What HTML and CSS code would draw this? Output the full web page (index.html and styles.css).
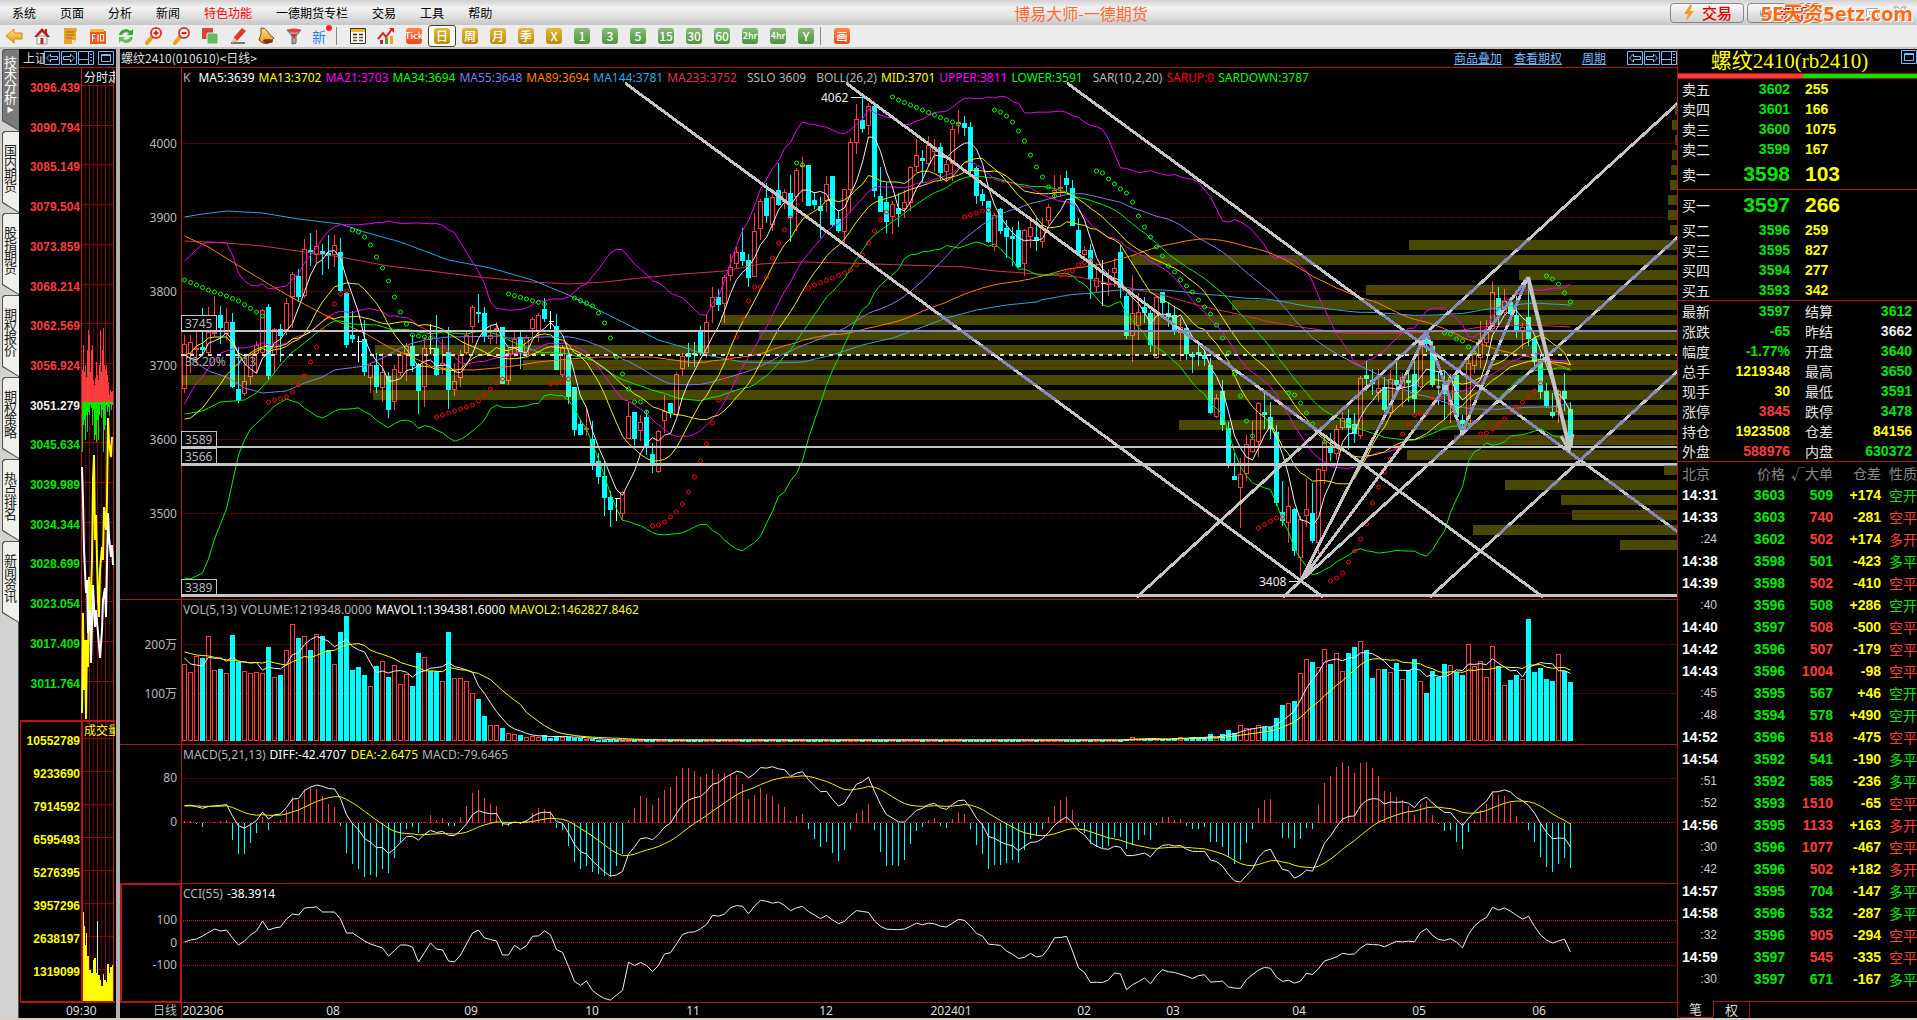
FILE: index.html
```html
<!DOCTYPE html>
<html lang="zh-CN">
<head>
<meta charset="utf-8">
<title>博易大师-一德期货</title>
<link rel="stylesheet" href="styles.css">
</head>
<body>
<svg class="defs" width="0" height="0" aria-hidden="true">
  <defs>
    <linearGradient id="gold" x1="0" y1="0" x2="0" y2="1"><stop offset="0" stop-color="#ffe27a"/><stop offset="1" stop-color="#e59a12"/></linearGradient>
    <symbol id="i-prev" viewBox="0 0 16 14"><path d="M.5.5h15v13H.5z M2.500 7l4-4v2.500h7v3h-7V11z" fill="#000" stroke="#7ab8ff"/></symbol>
    <symbol id="i-next" viewBox="0 0 16 14"><path d="M.5.5h15v13H.5z M13.500 7l-4-4v2.500h-7v3h7V11z" fill="#000" stroke="#7ab8ff"/></symbol>
    <symbol id="i-split" viewBox="0 0 16 14"><path d="M.5.5h15v13H.5z M10.500 1v12M1 8.500h9M12 3.500h2M12 6.500h2M12 9.500h2" fill="none" stroke="#7ab8ff"/></symbol>
    <symbol id="i-max" viewBox="0 0 16 14"><path d="M.5.5h15v13H.5z" fill="none" stroke="#7ab8ff"/><path d="M3.500 3.500h9v7h-9z M3 4.500h10" fill="none" stroke="#7ab8ff"/></symbol>
  </defs>
</svg>

<header class="menubar">
  <nav class="menus">
    <button>系统</button><button>页面</button><button>分析</button><button>新闻</button><button class="hot">特色功能</button><button>一德期货专栏</button><button>交易</button><button>工具</button><button>帮助</button>
  </nav>
  <h1 class="app-title">博易大师-一德期货</h1>
  <div class="header-actions">
    <button class="pill"><svg width="14" height="16" viewBox="0 0 14 16"><path d="M8 0L2 9h4l-2 7 8-10H8l2-6z" fill="#f79a1c"/></svg>交易</button>
    <button class="pill"><svg width="14" height="16" viewBox="0 0 14 16"><circle cx="7" cy="8" r="6" fill="#999"/><circle cx="7" cy="8" r="2" fill="#ddd"/></svg>资讯</button>
  </div>
  <div class="window-controls">
    <button aria-label="最小化"><svg width="14" height="14"><path d="M2 9.500h10v2H2z" fill="#fff" stroke="#aaa"/></svg></button>
    <button aria-label="还原"><svg width="14" height="14"><path d="M1.500 2.500h11v9h-11z M4.500 5.500h5v3h-5z" fill="#fff" stroke="#aaa"/></svg></button>
    <button aria-label="关闭"><svg width="14" height="14"><path d="M1 1h4l2 3 2-3h4L9 7l4 6H9L7 9l-2 4H1l4-6z" fill="#fff" stroke="#999"/></svg></button>
  </div>
  <div class="watermark">5E天资5etz.com</div>
</header>

<div class="toolbar" role="toolbar">
  <button aria-label="后退"><svg width="18" height="18" viewBox="0 0 18 18"><path d="M1 9l8-7v4h8v6H9v4z" fill="url(#gold)" stroke="#d08c10"/></svg></button>
  <button aria-label="首页"><svg width="18" height="18" viewBox="0 0 18 18"><path d="M4 9h10v8H4z" fill="#f2f2f2" stroke="#999"/><path d="M7.500 11h3v6h-3z" fill="#b03020"/><path d="M1 10l8-9 3 3V2h2v4l3 4h-3L9 5l-5 5z" fill="#c02018"/></svg></button>
  <button aria-label="记事"><svg width="18" height="18" viewBox="0 0 18 18"><path d="M3 1h12q2 2 0 4v9l-4 3H3z" fill="#e5a52c"/><path d="M5 5h8M5 8h8M5 11h6" stroke="#a86a10"/><path d="M11 17l4-4h-4z" fill="#ffe9a8"/></svg></button>
  <button aria-label="F10"><svg width="18" height="18" viewBox="0 0 18 18"><path d="M1 4h16v13H1z" fill="#f05a20"/><path d="M1 2h14v3H1z" fill="#f7b43c"/><path d="M3.500 14.500v-7h3M3.500 11h2.500M9 7.500v7M11.500 7.500h3v6.500h-3z" fill="none" stroke="#fff"/></svg></button>
  <button aria-label="刷新"><svg width="18" height="18" viewBox="0 0 18 18"><path d="M2 8q1-6 8-6l4 2 2-2v6h-6l2-2q-5-2-7 2z" fill="#3da63a"/><path d="M16 10q-1 6-8 6l-4-2-2 2v-6h6l-2 2q5 2 7-2z" fill="#64c050"/></svg></button>
  <button aria-label="放大"><svg width="18" height="18" viewBox="0 0 18 18"><path d="M7 10L2 16" stroke="#f0a020" stroke-width="4" stroke-linecap="round"/><circle cx="11" cy="6" r="5" fill="#fff" stroke="#e03828" stroke-width="2"/><path d="M8.500 6h5M11 3.500v5" stroke="#e02020" stroke-width="2"/></svg></button>
  <button aria-label="缩小"><svg width="18" height="18" viewBox="0 0 18 18"><path d="M7 10L2 16" stroke="#f0a020" stroke-width="4" stroke-linecap="round"/><circle cx="11" cy="6" r="5" fill="#fff" stroke="#e03828" stroke-width="2"/><path d="M8.500 6h5" stroke="#e02020" stroke-width="2"/></svg></button>
  <button aria-label="叠加"><svg width="18" height="18" viewBox="0 0 18 18"><rect x="1" y="1" width="11" height="11" rx="1" fill="#d8423c"/><rect x="6" y="6" width="11" height="11" rx="1" fill="#66b86a" stroke="#eee"/></svg></button>
  <button aria-label="画笔"><svg width="18" height="18" viewBox="0 0 18 18"><path d="M2 16h14" stroke="#777" stroke-width="2"/><path d="M13 1l4 3-9 10-5 2 2-6z" fill="#e63828"/><path d="M5 10l3 4-5 2z" fill="#f4c890"/></svg></button>
  <button aria-label="预警"><svg width="18" height="18" viewBox="0 0 18 18"><path d="M4 1q4-1 7 4 1 3 6 6l-5 5q-6 2-10-3 3-6 2-12z" fill="url(#gold)" stroke="#8a4a12"/><ellipse cx="11" cy="14" rx="5" ry="2" fill="#7b3516"/></svg></button>
  <button aria-label="筛选"><svg width="18" height="18" viewBox="0 0 18 18"><path d="M2 3h14l-5 6v7l-4 1V9z" fill="#aaa" stroke="#666"/><ellipse cx="9" cy="3.500" rx="6" ry="2" fill="#e64040"/><path d="M6 7l3 5 3-5z" fill="#e03030"/></svg></button>
  <button class="new-badge">新<i></i></button>
  <span class="sep"></span>
  <button aria-label="报价"><svg width="18" height="18" viewBox="0 0 18 18"><path d="M1.500 1.500h15v15h-15z" fill="#fff" stroke="#333"/><path d="M2 2h14v3H2z" fill="#f3b820"/><path d="M4 7.500h4M10 7.500h4" stroke="#222" stroke-width="1.500"/><path d="M4 10.500h4M10 10.500h4" stroke="#c22" stroke-width="1.500"/><path d="M4 13.500h4M10 13.500h4" stroke="#272" stroke-width="1.500"/></svg></button>
  <button aria-label="走势"><svg width="18" height="18" viewBox="0 0 18 18"><path d="M3 13h3v4H3z" fill="#c22"/><path d="M8 11h3v6H8z" fill="#3a3"/><path d="M13 9h3v8h-3z" fill="#e8a820"/><path d="M1 12l5-6 3 4 6-8" fill="none" stroke="#e02018" stroke-width="2"/><path d="M12 1h5v5z" fill="#e02018"/></svg></button>
  <button><b class="ico tick">Tick</b></button>
  <button class="active"><b class="ico period">日</b></button>
  <button><b class="ico period">周</b></button>
  <button><b class="ico period">月</b></button>
  <button><b class="ico period">季</b></button>
  <button><b class="ico period">X</b></button>
  <button><b class="ico minute">1</b></button>
  <button><b class="ico minute">3</b></button>
  <button><b class="ico minute">5</b></button>
  <button><b class="ico minute">15</b></button>
  <button><b class="ico minute">30</b></button>
  <button><b class="ico minute">60</b></button>
  <button><b class="ico minute small">2hr</b></button>
  <button><b class="ico minute small">4hr</b></button>
  <button><b class="ico minute">Y</b></button>
  <span class="sep"></span>
  <button><b class="ico tick draw">画</b></button>
</div>

<main class="workspace">
  <nav class="side-tabs">
    <button class="current">技术分析<i>▶</i></button>
    <button>国内期货</button>
    <button>股指期货</button>
    <button>期权报价</button>
    <button>期权策略</button>
    <button>热点排名</button>
    <button>新闻资讯</button>
  </nav>

  <section class="mini">
    <div class="title-row"><h2>上证</h2>
      <div class="tools">
        <button aria-label="上一个"><svg width="16" height="14"><use href="#i-prev"/></svg></button>
        <button aria-label="下一个"><svg width="16" height="14"><use href="#i-next"/></svg></button>
        <button aria-label="分栏"><svg width="16" height="14"><use href="#i-split"/></svg></button>
        <button aria-label="最大化" class="gap"><svg width="16" height="14"><use href="#i-max"/></svg></button>
      </div>
    </div>
    <svg id="mini" class="mini-plot"></svg>
    <div class="mini-time">09:30</div>
  </section>

  <section class="chart">
    <div class="title-row">
      <h2>螺纹2410(010610)&lt;日线&gt;</h2>
      <div class="links"><a href="#overlay">商品叠加</a><a href="#options">查看期权</a><a class="cycle" href="#cycle">周期</a></div>
      <div class="tools">
        <button aria-label="上一个"><svg width="16" height="14"><use href="#i-prev"/></svg></button>
        <button aria-label="下一个"><svg width="16" height="14"><use href="#i-next"/></svg></button>
        <button aria-label="分栏"><svg width="16" height="14"><use href="#i-split"/></svg></button>
      </div>
    </div>
    <div class="pane">
      <svg id="price" class="plot price-plot"></svg>
      <div class="legend">
        <span class="dim lead">K</span><span class="white">MA5:3639</span><span class="yellow">MA13:3702</span><span class="magenta">MA21:3703</span><span class="lime">MA34:3694</span><span class="violet">MA55:3648</span><span class="orange">MA89:3694</span><span class="sky">MA144:3781</span><span class="rose">MA233:3752</span><span class="dim group">SSLO 3609</span><span class="dim group">BOLL(26,2)</span><span class="yellow">MID:3701</span><span class="magenta">UPPER:3811</span><span class="lime">LOWER:3591</span><span class="dim group">SAR(10,2,20)</span><span class="red">SARUP:0</span><span class="lime">SARDOWN:3787</span>
      </div>
    </div>
    <div class="pane">
      <svg id="volume" class="plot volume-plot"></svg>
      <div class="legend"><span class="dim">VOL(5,13)</span><span class="dim">VOLUME:1219348.0000</span><span class="white">MAVOL1:1394381.6000</span><span class="yellow">MAVOL2:1462827.8462</span></div>
    </div>
    <div class="pane">
      <svg id="macd" class="plot macd-plot"></svg>
      <div class="legend"><span class="dim">MACD(5,21,13)</span><span class="white">DIFF:-42.4707</span><span class="yellow">DEA:-2.6475</span><span class="dim">MACD:-79.6465</span></div>
    </div>
    <div class="pane">
      <svg id="cci" class="plot cci-plot"></svg>
      <div class="legend"><span class="dim">CCI(55)</span><span class="white">-38.3914</span></div>
    </div>
    <svg id="dates" class="plot date-axis"></svg>
  </section>

  <aside class="quote">
    <div class="quote-title"><h2>螺纹2410(rb2410)</h2><button aria-label="最大化"><svg width="16" height="14"><use href="#i-max"/></svg></button></div>
    <div class="ratio"><i class="ratio-buy"></i><i class="ratio-sell"></i></div>
    <table class="book">
      <tr><th>卖五</th><td class="g">3602</td><td class="y">255</td></tr>
      <tr><th>卖四</th><td class="g">3601</td><td class="y">166</td></tr>
      <tr><th>卖三</th><td class="g">3600</td><td class="y">1075</td></tr>
      <tr><th>卖二</th><td class="g">3599</td><td class="y">167</td></tr>
      <tr class="best"><th>卖一</th><td class="g">3598</td><td class="y">103</td></tr>
    </table>
    <table class="book">
      <tr class="best"><th>买一</th><td class="g">3597</td><td class="y">266</td></tr>
      <tr><th>买二</th><td class="g">3596</td><td class="y">259</td></tr>
      <tr><th>买三</th><td class="g">3595</td><td class="y">827</td></tr>
      <tr><th>买四</th><td class="g">3594</td><td class="y">277</td></tr>
      <tr><th>买五</th><td class="g">3593</td><td class="y">342</td></tr>
    </table>
    <table class="stats">
      <tr><th>最新</th><td class="g">3597</td><th>结算</th><td class="g">3612</td></tr>
      <tr><th>涨跌</th><td class="g">-65</td><th>昨结</th><td class="w">3662</td></tr>
      <tr><th>幅度</th><td class="g">-1.77%</th><th>开盘</th><td class="g">3640</td></tr>
      <tr><th>总手</th><td class="y">1219348</td><th>最高</th><td class="g">3650</td></tr>
      <tr><th>现手</th><td class="y">30</td><th>最低</th><td class="g">3591</td></tr>
      <tr><th>涨停</th><td class="r">3845</td><th>跌停</th><td class="g">3478</td></tr>
      <tr><th>持仓</th><td class="y">1923508</td><th>仓差</th><td class="y">84156</td></tr>
      <tr><th>外盘</th><td class="r">588976</td><th>内盘</th><td class="g">630372</td></tr>
    </table>
    <div class="trades-wrap">
      <table class="trades">
        <thead><tr><th>北京</th><th>价格</th><th>√大单</th><th>仓差</th><th>性质</th></tr></thead>
        <tbody id="trades"></tbody>
      </table>
    </div>
    <div class="quote-tabs"><button class="current">笔</button><button>权</button></div>
  </aside>
</main>
<script src="chart.js"></script>
</body>
</html>
```

FILE: styles.css
```css
* { box-sizing: border-box; }
body { margin: 0; min-height: 100vh; display: flex; flex-direction: column; background: #d4d0c8; color: #ddd; font: 12px/16px "Noto Sans", "Noto Sans CJK SC", sans-serif; overflow-x: hidden; }
button { margin: 0; padding: 0; border: 0; background: none; color: inherit; font: inherit; }
h1, h2 { margin: 0; font-weight: 400; }
.defs { position: absolute; }

.menubar { position: relative; display: flex; align-items: center; height: 25px; background: linear-gradient(#d2d2d2, #f1f1f1 30%, #e4e4e4 60%, #c6c6c6); color: #000; font-family: "Noto Sans CJK SC", sans-serif; }
.menus { display: flex; gap: 24px; padding-left: 12px; white-space: nowrap; }
.menus .hot { color: #f00; }
.app-title { flex: 1; text-align: center; font-size: 16px; line-height: 24px; color: #ff6a30; }
.header-actions { display: flex; justify-content: flex-end; gap: 3px; padding-right: 16px; }
.pill { display: flex; align-items: center; justify-content: center; gap: 6px; width: 74px; height: 20px; border: 1px solid #888; border-radius: 4px; background: linear-gradient(#fafafa, #cfcfcf); color: #e00000; font-size: 15px; font-weight: 500; }
.window-controls { display: flex; gap: 14px; padding-right: 10px; }
.window-controls button { height: 14px; }
.window-controls svg { display: block; }
.watermark { position: absolute; right: 4px; top: 2px; color: #ff6a10; font: 700 20px/24px "Open Sans", "Noto Sans CJK SC", sans-serif; text-shadow: 1px 1px 0 #fff, -1px -1px 0 #fff; }

.toolbar { display: flex; height: 24px; background: #ececec; border-bottom: 2px solid #c8c4c4; }
.toolbar button { width: 28px; height: 22px; display: flex; align-items: center; justify-content: center; }
.toolbar .active { border: 1px solid #444; border-radius: 3px; background: #fff; }
.sep { width: 8px; border-left: 1px solid #888; margin: 2px 0; }
.new-badge { color: #2f86e8; font: 14px/18px "Noto Sans CJK SC", sans-serif; }
.new-badge i { width: 6px; height: 6px; border-radius: 3px; background: #f22; align-self: flex-start; }
.ico { width: 16px; height: 16px; border-radius: 3px; color: #fff; font: 500 12px/16px "Noto Sans CJK SC", sans-serif; text-align: center; white-space: nowrap; display: flex; justify-content: center; }
.period { background: linear-gradient(#e0bc38, #bc8a08); }
.minute { background: linear-gradient(#84bc74, #4f9442); }
.tick { background: linear-gradient(#ff8448, #ee4418); font-size: 9px; }
.small { font-size: 9px; }
.draw { font-size: 11px; }

.workspace { flex: 1; display: flex; align-items: stretch; margin-bottom: 2px; }
.side-tabs { width: 19px; padding-left: 2px; background: #d2d2d2; border-right: 1px solid #555; }
.side-tabs button { position: relative; z-index: 0; display: flex; flex-direction: column; align-items: center; justify-content: center; width: 17px; height: 82px; padding: 0 2px 8px; color: #222; font: 13px/12px "Noto Sans CJK SC", sans-serif; white-space: normal; word-break: break-all; background: #555; clip-path: polygon(0 2px, 2px 0, 100% 0, 100% 100%, 0 72px); }
.side-tabs button::before { content: ""; position: absolute; z-index: -1; inset: 1px 0 1px 1px; background: #f0f0ea; clip-path: polygon(0 2px, 2px 0, 100% 0, 100% 100%, 0 70px); }
.side-tabs .current { color: #fff; }
.side-tabs .current::before { background: #7a7a7a; }
.side-tabs i { font: 8px/12px "DejaVu Sans", sans-serif; }

.title-row { display: flex; align-items: center; height: 19px; border-bottom: 1px solid #b01010; background: #000; font-family: "Noto Sans CJK SC", sans-serif; white-space: nowrap; overflow: hidden; }
.title-row h2 { font-size: 12px; line-height: 16px; }
.tools { display: flex; gap: 1px; }
.tools svg, .quote-title svg { display: block; }
.tools .gap { margin-left: 3px; }

.mini { display: flex; flex-direction: column; width: 97px; background: #000; }
.mini h2 { width: 21px; margin-left: 4px; overflow: hidden; }
.mini-plot { display: block; width: 100%; height: 935px; }
.mini-time { height: 15px; padding-left: 47px; line-height: 15px; }

.chart { flex: 1; min-width: 0; border-left: 4px solid #b4b0b0; background: #000; }
.chart h2 { flex: 1; padding-left: 1px; }
.links { display: flex; gap: 12px; padding-right: 21px; }
.links a { color: #7ab8ff; text-decoration: underline; }
.links .cycle { margin-left: 8px; }
.pane { display: grid; border-bottom: 1px solid #b01010; }
.pane > * { grid-area: 1 / 1; }
.plot { display: block; width: 100%; }
.price-plot { height: 531px; }
.volume-plot { height: 144px; }
.macd-plot { height: 138px; }
.cci-plot { height: 118px; }
.date-axis { height: 15px; }
.legend { display: flex; gap: 4px; height: 20px; padding-left: 63px; line-height: 20px; white-space: nowrap; overflow: hidden; }
.legend .group { margin-left: 6px; }
.lead { margin-right: 4px; }
.white { color: #fff; } .yellow { color: #ff0; } .magenta { color: #f0f; } .lime { color: #0f0; }
.violet { color: #7c7cf0; } .orange { color: #ff8000; } .sky { color: #2ca8e0; } .rose { color: #e03050; }
.dim { color: #b4b4b4; } .red { color: #f00; }

svg text { font: 12px "Noto Sans", "Noto Sans CJK SC", sans-serif; }
.axis { fill: #b8b8b8; text-anchor: end; }
.date { fill: #ddd; text-anchor: middle; }
svg .mini-label { font: 700 12px "Liberation Sans", sans-serif; text-anchor: end; }
.crisp { shape-rendering: crispEdges; }
.line { fill: none; stroke-width: 1; }
.candles { --down: #00ffff; --up: #ff3c3c; --flat: #ffffff; }
.candles.shaded { --down: #48ffb8; --up: #ff7838; --flat: #ffffb8; }
.c { fill: var(--down); stroke: var(--down); }
.r { fill: #000; stroke: var(--up); }
.shaded .r { fill: #484800; }
.w { fill: var(--flat); stroke: var(--flat); }
.drawing { color: #c4c4c4; stroke: currentColor; fill: none; stroke-width: 3; }
.drawing.shaded { color: #8888c0; }

.quote { width: 240px; display: flex; flex-direction: column; background: #000; border-left: 1px solid #b01010; overflow: hidden; font-family: "Liberation Sans", "Noto Sans CJK SC", sans-serif; }
.quote-title { display: flex; height: 24px; }
.quote-title h2 { flex: 1; text-align: center; color: #ff0; font: 21px/24px "Liberation Serif", "Noto Sans CJK SC", serif; }
.quote-title button { align-self: flex-start; padding-top: 1px; }
.ratio { display: flex; height: 6px; border: solid #b01010; border-width: 1px 0; }
.ratio-buy { flex: 125; background: #ff3c3c; }
.ratio-sell { flex: 114; background: #00e800; }
table { border-collapse: collapse; border-spacing: 0; table-layout: fixed; }
th, td { padding: 0; overflow: visible; white-space: nowrap; }
th { color: #e4e4e4; font: 400 14px/20px "Noto Sans CJK SC", sans-serif; text-align: left; }
td { font-size: 14px; line-height: 20px; font-weight: 700; text-align: right; }
.book, .stats { width: 100%; border-bottom: 1px solid #b01010; }
.book tr, .stats tr { height: 20px; }
.book th { width: 50px; padding-left: 4px; }
.book td:nth-child(2) { width: 62px; }
.book td:nth-child(3) { text-align: left; padding-left: 15px; }
.book .best { height: 30px; }
.book .best td { font-size: 21px; line-height: 30px; }
.stats th:nth-child(1) { width: 40px; padding-left: 4px; }
.stats td:nth-child(2) { width: 72px; }
.stats th:nth-child(3) { width: 60px; padding-left: 15px; }
.stats td:nth-child(4) { padding-right: 5px; }
.g { color: #00e800; } .y { color: #ff0; } td.r { color: #ff3c3c; } td.w { color: #eee; }
.trades-wrap { flex: 1; }
.trades { width: 100%; }
.trades tr { height: 22px; }
.trades thead th { color: #888; text-align: right; line-height: 22px; }
.trades thead th:first-child { width: 44px; text-align: left; padding-left: 4px; }
.trades th:nth-child(2) { width: 63px; }
.trades th:nth-child(3) { width: 48px; }
.trades th:nth-child(4) { width: 48px; }
.trades thead th:last-child, .trades td:last-child { text-align: left; padding-left: 8px; }
.trades td:last-child { font: 400 14px/22px "Noto Sans CJK SC", sans-serif; }
.trades td { line-height: 22px; }
.trades .minute-cell { text-align: left; padding-left: 4px; color: #fff; }
.trades .second-cell { padding-right: 5px; color: #ccc; font-size: 12px; font-weight: 400; }
.quote-tabs { display: flex; height: 17px; border-top: 1px solid #b01010; }
.quote-tabs button { width: 36px; border-right: 1px solid #b01010; font: 13px/16px "Noto Sans CJK SC", sans-serif; color: #ddd; }
.quote-tabs .current { border-bottom: 1px solid #b01010; margin-top: -1px; background: #000; border-radius: 0 0 3px 3px; }
```

FILE: chart.js
```js
// Each day: type (c = down, r = up, w = flat), then high, body top, body bottom, low in chart y units.
const DAYS = `r335,344,389,393 r335,342,354,373 r327,348,349,363 c308,347,350,355 r307,332,353,355 r296,332,333,337 c306,315,328,344 r308,322,334,340 c313,322,387,388 c347,389,400,403 r360,381,394,396 r352,354,377,385 r341,345,354,373 r309,310,353,355 c304,307,376,380 r328,329,355,373 c324,329,336,362 r298,303,330,335 r272,274,297,328 c269,276,297,302 r239,249,296,298 c233,250,252,266 r230,246,255,263 c244,251,254,275 c235,253,256,269 r235,245,255,267 c238,252,291,292 c292,293,345,348 c311,335,339,343 w336,341,342,362 c320,339,372,376 r363,365,378,393 c353,365,387,393 r353,372,388,402 c372,376,410,418 r365,369,402,410 r353,355,373,376 r343,346,354,381 c335,346,366,372 c363,364,391,414 r337,348,387,407 w324,348,349,354 c315,348,375,376 r339,363,366,374 c327,352,390,409 r363,381,390,396 r350,355,378,387 r330,335,353,354 r305,307,327,343 c294,312,314,323 c307,313,337,342 r326,335,339,344 r322,328,330,344 c327,327,384,384 r348,353,381,385 r332,339,354,357 c331,337,352,369 r335,337,355,358 r317,319,329,337 r313,315,331,342 c298,309,319,322 w311,321,322,329 c314,326,370,370 r345,348,375,377 c354,355,397,404 c387,387,430,436 c419,424,435,435 r408,428,429,436 c421,439,465,470 c453,461,477,484 c461,476,498,516 c491,497,510,527 w498,498,499,521 r491,492,514,520 r402,416,439,439 c412,412,439,445 r415,422,431,441 c410,417,448,455 c443,454,464,473 r430,431,472,473 r395,411,421,433 c403,403,413,418 r372,374,415,416 r353,356,369,376 c343,353,357,367 c342,353,355,367 c326,330,353,356 r314,322,353,358 r287,297,307,323 c289,297,305,311 r275,277,304,323 r254,267,276,281 r247,252,264,268 c228,252,261,266 c254,260,278,287 r213,231,277,277 r199,201,229,240 c183,198,216,223 r189,197,225,231 c163,190,205,206 r189,192,202,209 c175,193,218,242 r168,170,197,231 r157,165,167,202 c165,165,206,206 c192,200,205,209 c197,206,211,238 r176,184,201,212 c176,176,225,227 c210,219,231,233 r189,189,232,243 r138,142,190,213 r104,119,143,154 c97,120,129,133 r103,106,126,135 c106,106,191,197 c167,196,212,212 c183,202,222,233 r201,204,217,234 c193,208,214,227 r190,202,209,218 r166,167,203,211 r139,155,167,172 c150,158,161,183 r136,145,164,166 r139,147,152,172 c143,147,173,180 r160,164,172,182 r125,129,164,181 r110,122,124,134 c116,123,128,136 c122,127,171,175 c166,168,196,204 c189,194,201,206 c201,201,242,243 r213,215,247,251 c208,209,231,234 c220,228,237,258 c227,236,239,266 c221,230,267,268 r229,230,264,276 r218,227,237,248 c218,237,241,251 r218,228,242,248 r204,207,221,225 r175,190,193,199 r175,187,189,197 c171,178,185,192 c180,188,226,226 c218,230,253,254 r246,250,255,258 c244,250,279,299 r263,278,287,292 w260,283,284,306 r269,283,285,296 r258,268,273,287 c245,252,288,298 c293,296,336,339 r275,313,336,362 r293,312,326,340 c297,307,313,323 c310,313,345,352 r296,297,358,359 c292,292,303,318 c302,313,317,327 c306,315,330,335 r318,327,333,361 c325,328,354,360 c352,354,357,373 c345,352,355,366 c350,355,359,366 c358,365,413,414 r394,398,417,418 c380,391,425,431 c422,428,463,468 c453,476,480,480 r458,474,488,528 r435,444,474,481 r421,439,452,453 r402,403,442,457 c393,412,415,429 c402,417,429,439 c425,432,503,506 c481,512,521,526 r487,506,523,543 c508,509,551,556 r516,519,558,582 r479,509,516,527 c483,513,541,543 r468,469,543,554 r438,442,471,484 c433,446,453,461 r425,429,454,460 r412,418,428,430 c409,418,428,450 c413,424,434,443 r376,378,436,439 c361,375,379,391 c369,380,384,395 r369,388,393,402 c377,387,410,412 r370,379,413,417 c361,380,385,395 r373,377,387,407 c371,380,383,402 c360,374,399,413 r337,342,387,388 c332,339,344,352 c341,346,385,387 c372,386,388,405 c370,384,394,420 r374,377,405,423 c373,375,417,422 c415,420,424,436 r359,363,424,427 r349,353,366,373 r321,339,358,368 r320,329,343,347 r281,292,329,330 c287,298,315,325 r289,301,313,315 c297,302,314,320 c296,315,332,338 r323,327,332,349 c283,317,339,346 c337,339,362,366 c356,361,392,399 c383,391,406,408 c393,412,416,418 r389,391,412,423 c373,391,399,411 c402,409,447,450`
  .split(/\s+/).map(s => { const [hi, top, bot, lo] = s.slice(1).split(',').map(Number); return { t: s[0], hi, top, bot, lo, close: s[0] === 'r' ? top : bot }; });

const N = DAYS.length;
const xAt = i => 184.5 + 6 * i;
const closes = DAYS.map(d => d.close);
const mean = a => a.reduce((s, v) => s + v, 0) / a.length;
const lerp = (pts, i) => {
  for (let k = 1; k < pts.length; k++) if (i <= pts[k][0]) {
    const [a, b] = [pts[k - 1], pts[k]];
    return a[1] + (b[1] - a[1]) * (i - a[0]) / (b[0] - a[0]);
  }
  return pts[pts.length - 1][1];
};
// Moving average; the days before a full window exists come from the lead-in points.
const ma = (src, n, lead) => src.map((_, i) => i >= n - 1 ? mean(src.slice(i - n + 1, i + 1)) : lerp(lead, i));
const list = s => s.split(',').map((y, i) => [i, +y]);
const path = ys => ys.map((y, i) => `${xAt(i)},${y.toFixed(1)}`).join(' ');
const line = (ys, color) => `<polyline class="line" stroke="${color}" points="${path(ys)}"/>`;
const grid = (ys, color = '#8c0000') => ys.map(y => `<line class="crisp" x1="183" x2="4000" y1="${y}" y2="${y}" stroke="${color}" stroke-dasharray="1 1"/>`).join('');
const axis = '<line class="crisp" x1="181" x2="181" y1="0" y2="1100" stroke="#c01414"/>';
const label = (y, t) => `<text class="axis" x="177" y="${y + 4}">${t}</text>`;
const mount = (id, x, y, body) => { document.getElementById(id).innerHTML = `<g transform="translate(${-x} ${-y})">${body}</g>`; };

// ---- price pane
const PROFILE = [[105,1675],[120,1672],[135,1675],[150,1672],[165,1671],[180,1670],[195,1668],[210,1668],[225,1670],[240,1409],[255,1131],[270,1519],[285,1366],[300,1232],[315,721],[330,759],[345,375],[360,523],[375,181],[390,373],[405,1265],[420,1179],[435,1454],[450,1407],[465,1664],[480,1505],[495,1561],[510,1572],[525,1473],[540,1620]];
const bars = PROFILE.map(([y, x]) => `<rect x="${x}" y="${y}" width="${1677 - x}" height="10"/>`).join('');

const candles = DAYS.map((d, i) => {
  const x = xAt(i);
  const wick = `<path class="${d.t}" d="M${x} ${d.hi}V${d.top}M${x} ${d.bot}V${d.lo}"/>`;
  if (d.t === 'w') return `<path class="w" d="M${x} ${d.hi}V${d.lo}M${x - 2} ${d.top + .5}h5"/>`;
  return wick + `<rect class="${d.t}" x="${x - 2}" y="${d.top + .5}" width="4" height="${Math.max(1, d.bot - d.top - 1)}"/>`;
}).join('');

const midLead = list('419,418,413,408,400,392,384,375,369,363,357,353,349,347,346,347,346,344,339,338,335,332,327,321,317');
const mid = ma(closes, 26, midLead);
const dev = closes.map((_, i) => { if (i < 25) return 0; const w = closes.slice(i - 25, i + 1), m = mean(w); return Math.sqrt(mean(w.map(v => (v - m) ** 2))); });
const upLead = [[0,261],[3,244],[4,242],[7,243],[8,255],[9,273],[10,281],[11,285],[12,286],[13,284],[14,289],[17,286],[18,279],[19,274],[20,263],[22,248],[23,238],[24,231]];
const loLead = [[0,578],[1,579],[2,576],[3,573],[4,559],[5,539],[7,509],[9,455],[10,440],[11,429],[13,418],[15,406],[17,399],[19,403],[20,408],[22,416],[23,418],[24,415]];
const upper = mid.map((m, i) => i < 25 ? lerp(upLead, i) : m - 2 * dev[i]);
const lower = mid.map((m, i) => i < 25 ? lerp(loLead, i) : m + 2 * dev[i]);
const ma34Lead = [[0,414],[3,411],[6,402],[10,400],[12,393],[14,380],[16,365],[18,352],[20,343],[22,333],[24,324],[25,321],[26,321],[28,324],[32,325],[33,327]];
const ma55Lead = [[0,355],[2,363],[4,371],[7,377],[10,388],[13,393],[17,391],[20,383],[23,377],[25,370],[30,366],[33,358],[36,348],[38,343],[41,339],[44,337],[54,336]];
const ma89Lead = [[0,236],[4,247],[8,262],[14,284],[18,298],[25,320],[30,333],[34,347],[39,360],[41,366],[44,369],[48,370],[52,368],[56,365],[59,362],[64,359],[69,357],[78,357],[85,363],[89,361]];
const ma144Lead = [[0,217],[3,214],[7,211],[13,213],[19,219],[26,224],[30,232],[36,242],[44,260],[51,268],[58,280],[64,295],[70,313],[76,331],[79,340],[83,347],[87,355],[93,362],[98,363],[103,362],[108,355],[113,345],[118,338],[123,327],[127,318],[132,310],[137,305],[142,302]];
const ma233 = [[0,241],[7,243],[13,246],[20,252],[26,257],[34,266],[41,271],[49,277],[58,282],[64,284],[70,282],[76,278],[83,274],[90,271],[96,264],[103,262],[110,263],[120,265],[130,267],[135,271],[140,273],[149,277],[156,286],[163,295],[170,307],[174,312],[181,322],[187,328],[193,333],[205,333],[213,330],[216,327],[224,325],[231,327]];

const SAR = [
  ['g', [[0,280],[4,290],[7,296],[9,301],[12,312],[13,316]]],
  ['r', [[14,402],[17,397],[18,392],[19,385],[20,376],[21,362],[22,347],[23,330],[24,317],[25,304],[26,294],[27,291]]],
  ['g', [[28,230],[29,232],[30,237],[31,245],[32,257],[33,268],[34,281],[35,297],[36,312],[37,324],[38,335],[41,338]]],
  ['r', [[42,417],[45,411],[48,405],[49,401],[50,395],[51,389],[52,383],[53,379]]],
  ['g', [[54,294],[57,299],[60,304]]],
  ['r', [[61,384],[63,382],[64,379]]],
  ['g', [[65,298],[68,306],[69,313],[70,323],[71,338],[72,357],[73,374],[74,389],[75,402],[76,402],[77,412]]],
  ['r', [[78,526],[79,525],[80,522],[81,517],[82,512],[83,504],[84,492],[85,477],[86,461],[87,444],[88,423],[89,400],[90,379],[91,358],[92,337],[93,319],[94,301],[95,287],[96,287],[97,277],[98,258],[99,243],[100,230],[101,218]]],
  ['g', [[102,163],[103,165]]],
  ['r', [[104,288],[105,285],[108,278],[110,273],[111,270],[112,265],[113,255],[114,243],[115,231],[116,220],[117,212]]],
  ['g', [[118,97],[119,100],[123,110],[127,120],[129,124]]],
  ['r', [[130,217],[131,215],[133,211],[134,210]]],
  ['g', [[135,110],[136,112],[137,116],[138,122],[139,131],[140,141],[141,155],[142,167],[143,177],[144,187],[145,196]]],
  ['r', [[146,275],[148,271],[149,265],[151,260]]],
  ['g', list('171,173,179,184,189,193,202,216,227,237,247,256,266,272,280,286,292,300,307,314,325,338,353,374,396,421,436').map(([i, y]) => [i + 152, y])],
  ['r', [[179,528],[181,521],[182,518],[183,517]]],
  ['g', [[184,393],[185,395],[186,403],[187,413],[188,424],[189,432],[190,442]]],
  ['r', list('581,578,573,562,551,539,524,503,487,472,459,447,434,424,415,414,414,398,387').map(([i, y]) => [i + 191, y])],
  ['g', [[210,333],[211,334],[212,339],[213,341],[214,347],[215,353]]],
  ['r', list('434,433,429,424,419,412,407,402,397,391,383').map(([i, y]) => [i + 216, y])],
  ['g', [[227,276],[228,279],[229,284],[230,293],[231,302]]]
];
const sar = SAR.map(([c, pts]) => {
  let out = '';
  for (let i = pts[0][0]; i <= pts[pts.length - 1][0]; i++) out += `<circle cx="${xAt(i)}" cy="${lerp(pts, i).toFixed(1)}" r="2" fill="none" stroke="${c === 'g' ? '#00ff00' : '#ff0000'}"/>`;
  return out;
}).join('');

const drawing = `
  <path d="M181 331H4000M181 447H4000" stroke-width="2"/><path d="M181 464.500H4000M181 595.500H4000"/>
  <path class="crisp" d="M625 83L1323 597M846 83L1543 597M1067 83L1678 532M1678 103L1137 597M1678 237L1283 597M1678 371L1430 597"/>
  <path class="crisp" d="M1300 582L1427 333L1462 433L1528 277M1300 582L1528 277"/>`;
const arrow = `<g class="drawing"><path d="M1528 277L1569 446" stroke-width="4"/><path d="M1561 436l8 14 4-16"/></g>`;
const tag = (y, t) => `<rect class="crisp" x="181.500" y="${y}" width="35" height="15" fill="#000" stroke="#c4c4c4"/><text x="185" y="${y + 12}" fill="#b8b8b8">${t}</text>`;

mount('price', 120, 68, `
  <defs><clipPath id="bars">${bars}</clipPath></defs>
  <g class="crisp" fill="#484800">${bars}</g>
  ${grid([143.5, 217.5, 291.5, 365.5, 439.5, 513.5])}${axis}
  ${[4000, 3900, 3800, 3700, 3600, 3500].map((p, k) => label(143.5 + 74 * k, p)).join('')}
  <g class="candles crisp">${candles}</g>
  <g clip-path="url(#bars)"><g class="candles shaded crisp">${candles}</g></g>
  ${line(DAYS.map((_, i) => lerp(ma233, i)), '#e03050')}
  ${line(ma(closes, 144, ma144Lead), '#2ca8e0')}
  ${line(ma(closes, 89, ma89Lead), '#ff8000')}
  ${line(ma(closes, 55, ma55Lead), '#7c7cf0')}
  ${line(ma(closes, 34, ma34Lead), '#00f000')}
  ${line(ma(closes, 21, list('404,393,383,377,368,360,353,351,349,348,348,347,345,343,345,345,345,343,339,336')), '#f000f0')}
  ${line(mid, '#f0f000')}
  ${line(ma(closes, 13, list('355,353,346,343,338,337,337,337,344,353,356,355')), '#f0f000')}
  ${line(upper, '#f000f0')}${line(lower, '#00f000')}
  ${line(ma(closes, 5, list('355,358,360,355')), '#f0f0f0')}
  ${sar}
  <g class="drawing">${drawing}</g>
  <g clip-path="url(#bars)"><g class="drawing shaded">${drawing}</g></g>
  ${arrow}
  <path class="crisp" d="M181 355H4000" stroke="#d8d8d8" stroke-width="2" stroke-dasharray="4 5"/>
  ${tag(315.5, 3745)}${tag(431.5, 3589)}${tag(448.5, 3566)}${tag(579.5, 3389)}
  <text x="185" y="366" fill="#a8a8a8">38.20% 3713</text>
  <text x="821" y="102" fill="#eee">4062</text><path d="M851 97.500h11" stroke="#eee"/>
  <text x="1259" y="586" fill="#eee">3408</text><path d="M1289 581.500h9" stroke="#eee"/>`);

// ---- volume pane
const tops = [664,672,656,658,636,670,669,673,635,662,671,673,672,673,647,677,675,650,624,638,636,650,634,636,650,664,632,616,670,667,675,686,666,661,677,665,684,674,686,653,657,671,671,681,632,678,678,681,693,699,716,725,725,728,733,734,735,737,736,737,735,738,736,737,737,738,738,739,739];
while (tops.length < 157) tops.push(740);
tops.push(739,737,739,739,739,739,739,739,738,737,738,737,738,737,734,738,734,730,733,725,728,728,725,727,727,718,705,703,701,673,659,662,667,649,664,653,671,653,647,641,650,678,669,669,672,663,679,670,659,681,693,671,677,664,665,672,675,644,666,661,677,646,666,685,680,675,679,619,672,668,679,681,654,671,682);
const vols = tops.slice(0, N);
mount('volume', 120, 600, grid([644.5, 693.5]) + axis + label(645, '200万') + label(694, '100万') +
  '<g class="candles crisp">' + vols.map((y, i) => `<rect class="${DAYS[i].t === 'r' ? 'r' : 'c'}" x="${xAt(i) - 2}" y="${y + .5}" width="4" height="${Math.max(0.5, 740 - y)}"/>`).join('') + '</g>' +
  line(ma(vols, 5, list('658,664,665,666')), '#f0f0f0') +
  line(ma(vols, 13, [[0,652],[2,655],[4,656],[7,660],[9,661],[11,663]]), '#ffff00'));

// ---- MACD pane
const price = closes.map(y => 4000 - (y - 143.5) / 0.74);
let fast = 3718, slow = 3687, signal = 30;
const diff = [], dea = [];
price.forEach((p, i) => {
  if (i) { fast += (p - fast) / 3; slow += (p - slow) / 11; }
  const d = fast - slow;
  if (i) signal += (d - signal) / 7;
  diff.push(d); dea.push(signal);
});
const my = v => 822.5 - v * 0.55;
mount('macd', 120, 745, grid([778.5]) + grid([822.5], '#d01010') + axis + label(778, '80') + label(822, '0') +
  '<g class="crisp">' + diff.map((d, i) => { const h = 2 * (d - dea[i]); return `<path d="M${xAt(i)} 822.500V${my(h).toFixed(1)}" stroke="${h > 0 ? '#ff3c3c' : '#00ffff'}"/>`; }).join('') + '</g>' +
  line(diff.map(my), '#f0f0f0') + line(dea.map(my), '#f0f000'));

// ---- CCI pane
const cciLead = [[0,942],[1,940],[2,939],[3,936],[5,929],[6,931],[7,930],[8,938],[9,945],[10,941],[11,935],[12,931],[13,921],[14,930],[15,928],[16,927],[17,919],[18,914],[19,915],[20,908],[22,907],[23,912],[25,912],[26,919],[27,933],[28,933],[30,941],[31,944],[33,948],[34,956],[36,945],[37,945],[38,947],[39,962],[41,943],[42,949],[43,950],[44,961],[45,962],[46,955],[47,944],[48,933],[49,930],[50,938],[52,941],[53,955],[54,955]];
const typical = DAYS.map(d => (d.hi + d.lo + d.close) / 3);
const cci = typical.map((t, i) => {
  if (i < 55) return lerp(cciLead, i);
  const w = typical.slice(i - 54, i + 1), m = mean(w), md = mean(w.map(v => Math.abs(v - m)));
  return 942.5 + (t - m) / (0.015 * md) * 0.225;
});
mount('cci', 120, 884, grid([920.5, 942.5, 965.5], '#d01010') + '<rect x="121" y="884" width="60" height="118" fill="none" stroke="#c01414" stroke-width="2"/>' + axis +
  label(920, '100') + label(943, '0') + label(965, '-100') + line(cci, '#f0f0f0'));

mount('dates', 120, 1003, axis + '<text class="axis" x="177" y="1015">日线</text>' +
  [['202306', 203], ['08', 333], ['09', 471], ['10', 592], ['11', 693], ['12', 826], ['202401', 951], ['02', 1084], ['03', 1173], ['04', 1299], ['05', 1419], ['06', 1539]]
    .map(([t, x]) => `<text class="date" x="${x}" y="1015">${t}</text>`).join(''));

// ---- index mini chart
const red = [370,345,372,365,377,350,330,335,372,350,345,380,385,378,362,375,380,365,330,372,350,328,365,370,365,375,382,395,390,392,391];
const green = [452,425,420,440,415,432,412,415,405,408,425,410,440,435,442,420,440,415,405,418,410,452,430,425,405,412,407,415,404,410,405];
const turnover = [[82,742],[83,912],[84,926],[85,945],[86,933],[87,956],[89,970],[91,973],[93,960],[94,958],[96,973],[97,921],[98,975],[100,980],[101,986],[103,974],[104,980],[106,982],[107,964],[109,973],[110,967],[112,965],[113,897]];
let mini = '';
for (let x = 85; x < 113; x += 4) mini += `<line x1="${x + .5}" x2="${x + .5}" y1="85" y2="1002" stroke="#900000" stroke-dasharray="${(x - 85) % 8 ? 'none' : '1 1'}"/>`;
for (let k = 0; k < 16; k++) mini += `<line x1="82" x2="114" y1="${85.5 + Math.round(39.7 * k)}" y2="${85.5 + Math.round(39.7 * k)}" stroke="#900000"/>`;
for (let k = 0; k < 8; k++) mini += `<line x1="82" x2="114" y1="${738.5 + 33 * k}" y2="${738.5 + 33 * k}" stroke="#900000"/>`;
mini += red.map((y, k) => `<path d="M${82.5 + k} ${y}V402" stroke="#ff3c3c"/><path d="M${82.5 + k} 402V${green[k]}" stroke="#00e800"/>`).join('');
mini += turnover.map(([x, y], k) => `<rect x="${x}" y="${y}" width="${k < turnover.length - 1 ? turnover[k + 1][0] - x : 1}" height="${1001 - y}" fill="#ff0"/>`).join('');
const miniLabels = ['3096.439', '3090.794', '3085.149', '3079.504', '3073.859', '3068.214', '3062.569', '3056.924', '3051.279', '3045.634', '3039.989', '3034.344', '3028.699', '3023.054', '3017.409', '3011.764'];
const turnoverLabels = ['10552789', '9233690', '7914592', '6595493', '5276395', '3957296', '2638197', '1319099'];
mount('mini', 19, 68, `<g class="crisp">${mini}
  <path d="M81.500 68V1002M113.500 68V1002" stroke="#d01414"/><path d="M20 720.500H115M20 1001.500H115M81.500 720V1002" stroke="#c01414" stroke-width="2"/><path d="M20.500 720V1002" stroke="#c01414"/></g>
  <polyline fill="none" stroke="#ff0" stroke-width="2" points="82,713 83,613 84,690 85,640 86,719 87,640 88,667 89,577 90,627 92,560 93,480 94,455 95,540 96,515 97,560 98,600 99,617 100,570 102,547 103,560 104,507 106,530 107,500 108,418 109,443 111,457 112,437"/>
  <polyline fill="none" stroke="#fff" stroke-width="2" points="82,467 83,500 84,550 86,593 87,580 88,633 90,610 91,663 93,585 95,627 96,610 98,633 100,658 102,630 103,600 105,588 106,617 108,513 109,537 111,557 112,545 113,565"/>
  ${miniLabels.map((t, k) => `<text class="mini-label" x="80" y="${92 + Math.round(39.7 * k)}" fill="${k < 8 ? '#ff3c3c' : k === 8 ? '#eeeeee' : '#00e800'}">${t}</text>`).join('')}
  ${turnoverLabels.map((t, k) => `<text class="mini-label" x="80" y="${745 + 33 * k}" fill="#ffff00">${t}</text>`).join('')}
  <svg x="82" y="68" width="33" height="920"><text x="2" y="14" fill="#eee">分时走势</text><text x="2" y="667" fill="#ff0">成交量</text></svg>`);

// ---- time and sales
const TRADES = `14:31 3603 g509 +174 g空开|14:33 3603 r740 -281 r空平|:24 3602 r502 +174 r多开|14:38 3598 g501 -423 g多平|14:39 3598 r502 -410 r空平|:40 3596 g508 +286 g空开|14:40 3597 r508 -500 r空平|14:42 3596 r507 -179 r空平|14:43 3596 r1004 -98 r空平|:45 3595 g567 +46 g空开|:48 3594 g578 +490 g空开|14:52 3596 r518 -475 r空平|14:54 3592 g541 -190 g多平|:51 3592 g585 -236 g多平|:52 3593 r1510 -65 r空平|14:56 3595 r1133 +163 r多开|:30 3596 r1077 -467 r空平|:42 3596 r502 +182 r多开|14:57 3595 g704 -147 g多平|14:58 3596 g532 -287 g多平|:32 3596 r905 -294 r空平|14:59 3597 r545 -335 r空平|:30 3597 g671 -167 g多平`;
document.getElementById('trades').innerHTML = TRADES.split('|').map(s => {
  const [time, p, q, d, n] = s.split(' ');
  return `<tr><td class="${time[0] === ':' ? 'second-cell' : 'minute-cell'}">${time}</td><td class="g">${p}</td><td class="${q[0]}">${q.slice(1)}</td><td class="y">${d}</td><td class="${n[0]}">${n.slice(1)}</td></tr>`;
}).join('');
```
